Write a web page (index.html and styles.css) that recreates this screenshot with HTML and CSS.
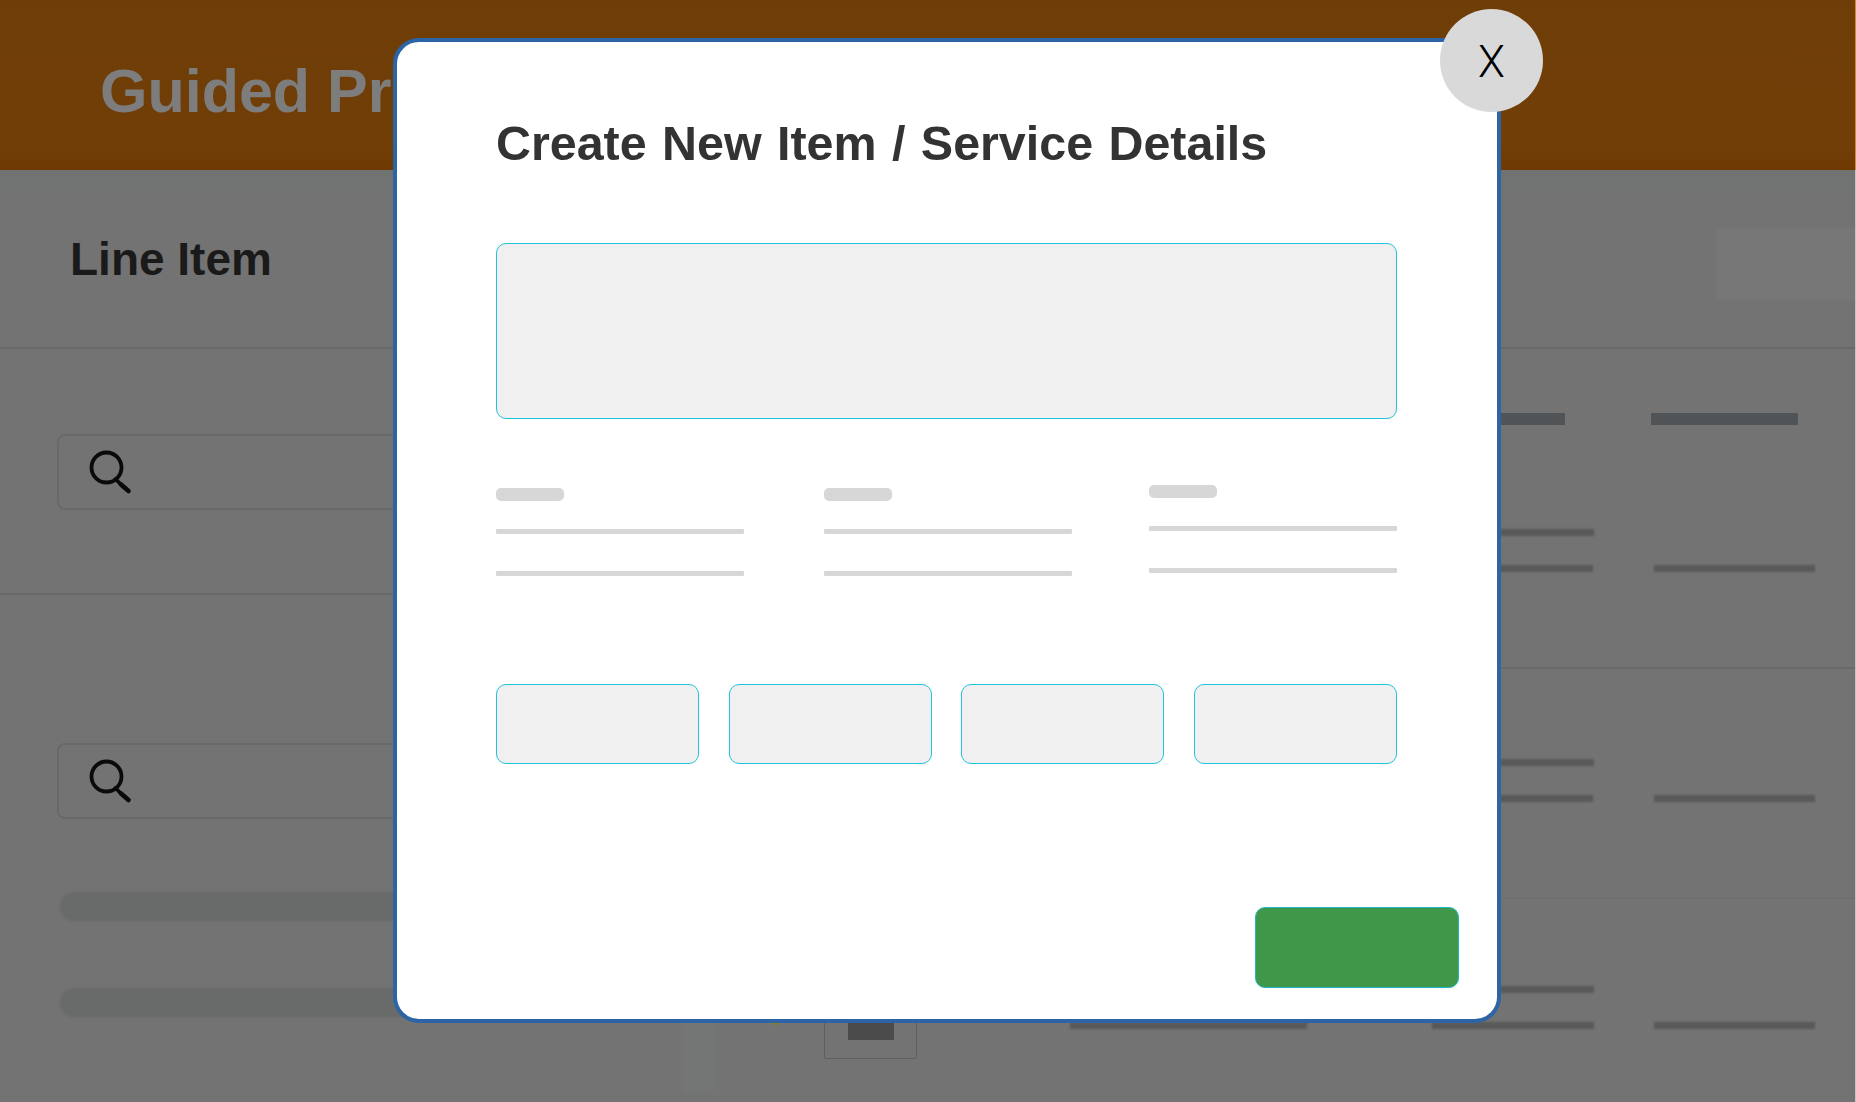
FILE: index.html
```html
<!DOCTYPE html>
<html lang="en">
<head>
<meta charset="utf-8">
<title>Create New Item / Service Details</title>
<link rel="stylesheet" href="styles.css">
</head>
<body>
<div class="app">
  <header class="banner"><h1 class="banner-title">Guided Pr</h1></header>
  <div class="toolbar">
    <h2 class="toolbar-title">Line Item</h2>
    <div class="toolbar-box"></div>
  </div>
  <main class="content">
    <aside class="side">
      <section class="side-one">
        <div class="search">
          <svg class="search-icon" viewBox="0 0 42 42"><circle cx="16.5" cy="16.5" r="15"/><path d="M25.5 28 L31 33.5"/><path class="search-grip" d="M31 33.5 L38.5 40"/></svg>
        </div>
      </section>
      <section class="side-two">
        <div class="search">
          <svg class="search-icon" viewBox="0 0 42 42"><circle cx="16.5" cy="16.5" r="15"/><path d="M25.5 28 L31 33.5"/><path class="search-grip" d="M31 33.5 L38.5 40"/></svg>
        </div>
        <div class="pill"></div>
        <div class="pill pill-second"></div>
      </section>
    </aside>
    <section class="table">
      <div class="thead">
        <div class="head-bar col-c"></div>
        <div class="head-bar col-d"></div>
      </div>
      <div class="row row-one">
        <div class="stack col-c"><div class="line"></div><div class="line line-short"></div></div>
        <div class="stack col-d"><div class="line line-empty"></div><div class="line"></div></div>
      </div>
      <div class="row row-two">
        <div class="stack col-c"><div class="line"></div><div class="line line-short"></div></div>
        <div class="stack col-d"><div class="line line-empty"></div><div class="line"></div></div>
      </div>
      <div class="row row-three">
        <div class="strip col-strip"></div>
        <div class="dot col-dot"></div>
        <div class="thumb col-thumb"><div class="thumb-inner"></div></div>
        <div class="stack col-b"><div class="line line-empty"></div><div class="line"></div></div>
        <div class="stack col-c"><div class="line"></div><div class="line"></div></div>
        <div class="stack col-d"><div class="line line-empty"></div><div class="line"></div></div>
      </div>
    </section>
  </main>

  <div class="modal">
    <button class="close" type="button">X</button>
    <h2 class="modal-title">Create New Item / Service Details</h2>
    <div class="field field-large"></div>
    <div class="details">
      <div class="detail"><div class="sk-label"></div><div class="sk-line"></div><div class="sk-line"></div></div>
      <div class="detail"><div class="sk-label"></div><div class="sk-line"></div><div class="sk-line"></div></div>
      <div class="detail detail-raised"><div class="sk-label"></div><div class="sk-line"></div><div class="sk-line"></div></div>
    </div>
    <div class="cards">
      <div class="field"></div>
      <div class="field"></div>
      <div class="field"></div>
      <div class="field"></div>
    </div>
    <div class="submit"></div>
  </div>
</div>
</body>
</html>
```
FILE: styles.css
```css
* { box-sizing: border-box; }
html, body { margin: 0; padding: 0; }
body { font-family: "Liberation Sans", Arial, sans-serif; background: #737373; }

.app {
  position: relative;
  width: 1856px;
  height: 1102px;
  overflow: hidden;
  background: #737373;
  display: flex;
  flex-direction: column;
}
/* Undimmed sliver at the far right of the page */
.app::after {
  content: "";
  position: absolute;
  top: 0;
  right: 0;
  bottom: 0;
  width: 1px;
  background: linear-gradient(#d98a25 0, #d98a25 170px, #c4c4c4 170px);
}

/* Dimmed page behind the dialog */
.banner {
  height: 170px;
  flex: none;
  padding-left: 100px;
  display: flex;
  align-items: center;
  background: linear-gradient(#6f3d07 0, #713e08 85%, #6f3a02 100%);
}
.banner-title {
  margin: 12px 0 0;
  font-size: 61px;
  line-height: 70px;
  font-weight: 700;
  color: #7d7d7d;
}

.toolbar {
  height: 179px;
  flex: none;
  padding-left: 70px;
  display: flex;
  align-items: center;
  justify-content: space-between;
  border-bottom: 2px solid #696969;
  background: linear-gradient(#707272 0, #737373 30px);
}
.toolbar-title {
  margin: 1px 0 0;
  font-size: 46px;
  line-height: 54px;
  font-weight: 700;
  color: #1a1a1a;
}
.toolbar-box {
  width: 141px;
  height: 74px;
  align-self: flex-start;
  margin-top: 57px;
  border-radius: 8px 0 0 8px;
  background: #777;
  filter: blur(.8px);
}

.content {
  flex: 1;
  display: grid;
  grid-template-columns: 420px 1fr;
  min-height: 0;
}

.side-one {
  height: 246px;
  padding: 85px 0 0 57px;
  border-bottom: 2px solid #696969;
}
.side-two { padding: 148px 0 0 57px; }
.search {
  width: 363px;
  height: 76px;
  padding-left: 31px;
  display: flex;
  align-items: center;
  border: 2px solid #696969;
  border-right: 0;
  border-radius: 8px 0 0 8px;
}
.search-icon {
  width: 42px;
  height: 42px;
  fill: none;
  stroke: #0a0a0a;
  stroke-width: 3.8;
  stroke-linecap: round;
  overflow: visible;
}
.search-grip { stroke-width: 4.6; }
.pill {
  width: 363px;
  height: 29px;
  margin: 73px 0 0 3px;
  border-radius: 14px 0 0 14px;
  background: #696a6a;
  filter: blur(1px);
}
.pill-second { margin-top: 67px; }

.table { min-width: 0; }
.thead, .row {
  display: grid;
  grid-template-columns: 262px 33px 50px 20px 39px 93px 153px 237px 125px 162px 60px 161px;
  align-items: start;
}
.col-strip { grid-column: 2; }
.col-dot { grid-column: 4; }
.col-thumb { grid-column: 6; }
.col-b { grid-column: 8; }
.col-c { grid-column: 10; }
.col-d { grid-column: 12; }

.thead { height: 149px; padding-top: 64px; }
.head-bar { height: 12px; background: #505457; }
.thead .col-c { width: 133px; }
.thead .col-d { width: 147px; margin-left: -3px; }

.row-one { height: 171px; padding-top: 31px; border-bottom: 2px solid #6a6a6a; }
.row-two { height: 230px; padding-top: 90px; border-bottom: 1px solid #6d6d6d; }
.row-three { padding-top: 87px; }

.stack { display: flex; flex-direction: column; gap: 29px; }
.line {
  height: 7px;
  background: #595959;
  filter: blur(1px);
}
.line-empty { background: transparent; filter: none; }
.line-short { margin-right: 1px; }

.strip {
  height: 107px;
  background: #747575;
  filter: blur(1px);
}
.dot {
  width: 20px;
  height: 39px;
  border-radius: 50%;
  background: #8a7a24;
  filter: blur(.5px);
}
.thumb {
  height: 73px;
  padding-top: 20px;
  display: flex;
  justify-content: center;
  border: 1px solid #5f5f5f;
  border-top: 0;
  border-radius: 0 0 2px 2px;
}
.thumb-inner {
  width: 46px;
  height: 34px;
  background: #4b4b4b;
}

/* Dialog */
.modal {
  position: absolute;
  left: 393px;
  top: 38px;
  width: 1108px;
  height: 985px;
  padding: 71px 100px 0 99px;
  display: flex;
  flex-direction: column;
  background: #fff;
  border: 4px solid #2d64a5;
  border-radius: 26px;
}
.close {
  position: absolute;
  top: -33px;
  right: -46px;
  width: 103px;
  height: 103px;
  padding: 0;
  border: 0;
  border-radius: 50%;
  background: #d9d9d9;
  color: #000;
  font-family: Roboto, "Liberation Sans", sans-serif;
  font-weight: 300;
  font-size: 44px;
  line-height: 107px;
}
.modal-title {
  margin: 0;
  font-size: 48.4px;
  word-spacing: 2px;
  line-height: 60px;
  font-weight: 700;
  color: #333;
}
.field {
  height: 80px;
  background: #f0f0f0;
  border: 1px solid #20c4d8;
  border-radius: 10px;
}
.field-large {
  height: 176px;
  margin-top: 70px;
  flex: none;
}
.details {
  margin-top: 69px;
  display: grid;
  grid-template-columns: 328px 325px 248px;
}
.detail { width: 248px; }
.detail-raised { margin-top: -3px; }
.sk-label {
  width: 68px;
  height: 13px;
  border-radius: 5px;
  background: #d7d7d7;
}
.sk-line {
  height: 5px;
  margin-top: 37px;
  border-radius: 1px;
  background: #d7d7d7;
}
.sk-label + .sk-line { margin-top: 28px; }
.cards {
  margin-top: 108px;
  display: grid;
  grid-template-columns: repeat(4, 203px);
  column-gap: 29.5px;
}
.submit {
  width: 204px;
  height: 81px;
  margin: 143px -62px 0 auto;
  flex: none;
  background: #3f984a;
  border: 1px solid #1fb8c6;
  border-radius: 10px;
}
```
